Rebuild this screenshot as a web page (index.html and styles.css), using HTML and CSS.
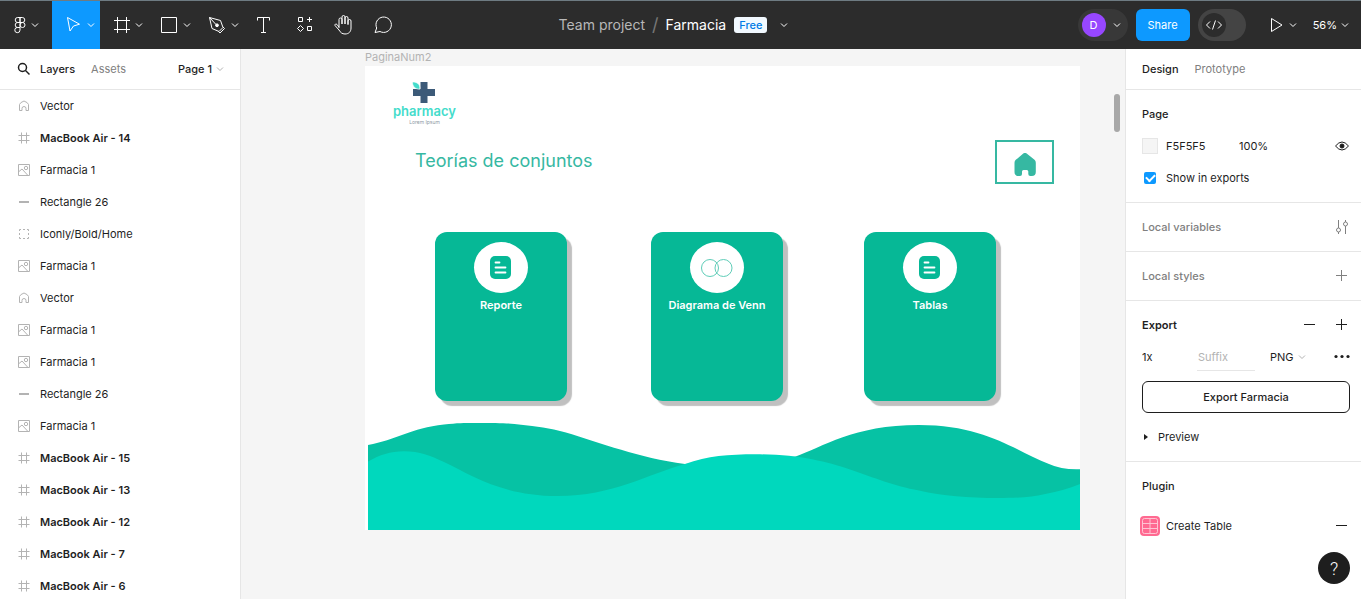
FILE: index.html
```html
<!DOCTYPE html>
<html lang="en">
<head>
<meta charset="utf-8">
<title>Farmacia</title>
<link rel="stylesheet" href="styles.css">
</head>
<body>
<svg class="sprite" aria-hidden="true">
  <symbol id="chev" viewBox="0 0 8 8"><path d="M1 2.5 4 5.5 7 2.5"/></symbol>
  <symbol id="vector" viewBox="0 0 16 16"><path d="M3.500 12.500V6.500Q4 4.500 8 3q4 1.500 4.500 3.500v6h-2.500v-2a2 2 0 0 0-4 0v2z"/></symbol>
  <symbol id="frame" viewBox="0 0 16 16"><path d="M5.500 2.500v11M10.500 2.500v11M2.500 5.500h11M2.500 10.500h11"/></symbol>
  <symbol id="image" viewBox="0 0 16 16"><path d="M2.500 2.500h11v11h-11zM3 9.500 6 7l6 6.500"/><circle cx="10" cy="6" r="1.700"/></symbol>
  <symbol id="line" viewBox="0 0 16 16"><path stroke-width="2" d="M3 8h10"/></symbol>
  <symbol id="group" viewBox="0 0 16 16"><path d="M3.500 5v-1.500H5M7 3.500h2M11 3.500h1.500V5M12.500 7v2M12.500 11v1.500H11M9 12.500H7M5 12.500H3.500V11M3.500 9V7"/></symbol>
  <symbol id="plus" viewBox="0 0 16 16"><path d="M7.500 2v11M2 7.500h11"/></symbol>
  <symbol id="minus" viewBox="0 0 16 16"><path d="M2 7.500h11"/></symbol>
  <symbol id="doc" viewBox="0 0 22 24"><rect width="21" height="23" rx="5" fill="#06b896"/><path d="M5.500 6.500H9.500M5.500 11.500h10M5.500 16.500h10" stroke="#fff" stroke-width="1.800" stroke-linecap="round"/></symbol>
</svg>
<header class="toolbar">
  <nav class="tools" aria-label="Tools">
    <button class="tool menu" aria-label="Main menu"><svg class="ico" viewBox="0 0 20 20"><path d="M10 2.500H7.700a2.500 2.500 0 0 0 0 5H10zM10 2.500h2.300a2.500 2.500 0 0 1 0 5H10zM10 7.500H7.700a2.500 2.500 0 0 0 0 5H10z"/><circle cx="12.500" cy="10" r="2.500"/><path d="M10 12.500H7.700a2.600 2.600 0 1 0 2.300 2.600z"/></svg><svg class="chev"><use href="#chev"/></svg></button>
    <button class="tool active" aria-label="Move"><svg class="ico" viewBox="0 0 20 20"><path d="m3.500 2.500 12 6.700-6 1.800-3.500 5z"/></svg><svg class="chev"><use href="#chev"/></svg></button>
    <button class="tool" aria-label="Frame"><svg class="ico" viewBox="0 0 20 20"><path d="M5.500 2v16M14.500 2v16M2 5.500h16M2 14.500h16"/></svg><svg class="chev"><use href="#chev"/></svg></button>
    <button class="tool" aria-label="Rectangle"><svg class="ico" viewBox="0 0 20 20"><path d="M1.500 2.500h15v15h-15z"/></svg><svg class="chev"><use href="#chev"/></svg></button>
    <button class="tool" aria-label="Pen"><svg class="ico" viewBox="0 0 20 20"><path d="m1.500 2.500 11 3 2.500 7-4 4-7-3zM1.500 2.500l6.500 7M15 12l1.500 1.500-4.500 4.500-1.500-1.500"/><circle cx="9" cy="10.300" r="1.400" fill="#fff"/></svg><svg class="chev"><use href="#chev"/></svg></button>
    <button class="tool single" aria-label="Text"><svg class="ico" viewBox="0 0 20 20"><path d="M3.500 5.500v-3h12v3M9.500 2.500v15M7 17.500h5"/></svg></button>
    <button class="tool single" aria-label="Resources"><svg class="ico" viewBox="0 0 20 20"><path d="M4.500 2.500h4v4h-4zM13.500 11.500h4v4h-4zM15.500 2v5M13 4.500h5M6.500 10.500l3 3-3 3-3-3z"/></svg></button>
    <button class="tool single" aria-label="Hand"><svg class="ico" viewBox="0 0 20 20"><path d="M5 13V4.500a1.500 1.500 0 0 1 3 0V9M8 9V2a1.500 1.500 0 0 1 3 0v7M11 9V3a1.500 1.500 0 0 1 3 0v7M14 9V6a1.500 1.500 0 0 1 3 0v7c0 3.500-2 6-6 6-3 0-4.500-1.500-6-4L1 10.500c-.5-1.300 1-2 2-1L5 12"/></svg></button>
    <button class="tool single" aria-label="Comment"><svg class="ico" viewBox="0 0 20 20"><path d="M1 17.500 2.700 13a7.700 7.700 0 1 1 3.300 3.500z"/></svg></button>
  </nav>
  <div class="title"><span class="team">Team project</span><span class="slash">/</span><span class="file">Farmacia</span><span class="free">Free</span><button class="drop" aria-label="File options"><svg class="chev"><use href="#chev"/></svg></button></div>
  <div class="actions">
    <button class="pill"><span class="avatar">D</span><svg class="chev"><use href="#chev"/></svg></button>
    <button class="share">Share</button>
    <button class="toggle" aria-label="Dev mode"><svg class="knob" viewBox="0 0 24 24"><path d="M8 8.500 4.500 12 8 15.500M16 8.500l3.500 3.500-3.500 3.500M13.500 7.500l-3 9"/></svg></button>
    <button class="play" aria-label="Present"><svg class="ico" viewBox="0 0 20 20"><path d="M5.500 3.500v13L16 10z"/></svg><svg class="chev"><use href="#chev"/></svg></button>
    <button class="percent">56%<svg class="chev"><use href="#chev"/></svg></button>
  </div>
</header>
<main class="work">
  <aside class="layers">
    <div class="tabs">
      <button class="search" aria-label="Search"><svg viewBox="0 0 16 16"><circle cx="6.500" cy="6.500" r="4"/><path d="m9.500 9.500 4 4"/></svg></button>
      <button class="tab on">Layers</button><button class="tab">Assets</button>
      <button class="pages">Page 1<svg class="chev"><use href="#chev"/></svg></button>
    </div>
    <ul class="list">
      <li><svg><use href="#vector"/></svg>Vector</li>
      <li class="top"><svg><use href="#frame"/></svg>MacBook Air - 14</li>
      <li><svg><use href="#image"/></svg>Farmacia 1</li>
      <li><svg><use href="#line"/></svg>Rectangle 26</li>
      <li><svg><use href="#group"/></svg>Iconly/Bold/Home</li>
      <li><svg><use href="#image"/></svg>Farmacia 1</li>
      <li><svg><use href="#vector"/></svg>Vector</li>
      <li><svg><use href="#image"/></svg>Farmacia 1</li>
      <li><svg><use href="#image"/></svg>Farmacia 1</li>
      <li><svg><use href="#line"/></svg>Rectangle 26</li>
      <li><svg><use href="#image"/></svg>Farmacia 1</li>
      <li class="top"><svg><use href="#frame"/></svg>MacBook Air - 15</li>
      <li class="top"><svg><use href="#frame"/></svg>MacBook Air - 13</li>
      <li class="top"><svg><use href="#frame"/></svg>MacBook Air - 12</li>
      <li class="top"><svg><use href="#frame"/></svg>MacBook Air - 7</li>
      <li class="top"><svg><use href="#frame"/></svg>MacBook Air - 6</li>
    </ul>
  </aside>
  <section class="canvas">
    <span class="frame-name">PaginaNum2</span>
    <div class="artboard">
      <div class="logo">
        <svg viewBox="0 0 24 22"><path fill="#3c5a78" d="M8.500 1h7v7H23v7h-7.500v7h-7v-7H1V8h7.500z"/><path fill="#44dccb" stroke="#fff" stroke-width=".6" d="M.5 1C5 1 8.500 3 7.700 8.300 3 8 .5 5.500.5 1z"/></svg>
        <span class="brand">pharmacy</span><span class="tagline">Lorem Ipsum</span>
      </div>
      <h1 class="heading">Teorías de conjuntos</h1>
      <button class="home" aria-label="Home"><svg viewBox="0 0 22 23"><path d="M9 .8a3 3 0 0 1 4 0l7.500 6q1.300 1.200 1.300 3V19a4 4 0 0 1-4 4h-1.500a2 2 0 0 1-2-2v-2.500a1.500 1.500 0 0 0-1.500-1.500H9.500A1.500 1.500 0 0 0 8 18.500V21a2 2 0 0 1-2 2H4.500a4 4 0 0 1-4-4V9.800q0-1.800 1.300-3z"/></svg></button>
      <article class="card report"><span class="disc"><svg class="doc"><use href="#doc"/></svg></span>Reporte</article>
      <article class="card venn"><span class="disc"><svg class="rings" viewBox="0 0 32 18"><circle cx="9" cy="9" r="8.500"/><circle cx="22.500" cy="9" r="8.500"/></svg></span>Diagrama de Venn</article>
      <article class="card tables"><span class="disc"><svg class="doc"><use href="#doc"/></svg></span>Tablas</article>
      <svg class="waves" viewBox="0 0 712 110" preserveAspectRatio="none"><path fill="#06c2a4" d="M0 25C28 20 43 8 76 4.500C90 3 95 3 108 3C130 3 140 3 153 4.700C168 6 182 8 197 12.300C234 23 270 38 317 44L427 36.700C455 27 485 5 551 5C620 5 650 33 681 44Q694 50 712 49.300V110H0Z"/><path fill="#00d8bd" d="M0 41.500C12 35 22 31.300 36 31.300C52 31.300 62 35.500 76 42C105 56 135 76 190 76C245 76 280 54 317 44C340 36 360 34.300 388 34.300C470 34.300 500 62 551 70.500C575 76 600 78 630 78C650 78 665 77 676 74.300Q698 70 712 64V110H0Z"/></svg>
    </div>
    <span class="thumb"></span>
  </section>
  <aside class="inspector">
    <div class="tabs"><button class="tab on">Design</button><button class="tab">Prototype</button></div>
    <section class="group">
      <h2 class="row">Page</h2>
      <div class="row"><span class="swatch"></span><input class="hex" aria-label="Page colour" value="F5F5F5"><input class="alpha" aria-label="Opacity" value="100%"><button class="act" aria-label="Visibility"><svg viewBox="0 0 16 16"><path d="M1.500 8q6.500-8 13 0-6.500 8-13 0z"/><circle cx="8" cy="8" r="2" fill="#1e1e1e"/></svg></button></div>
      <label class="row"><input class="check" type="checkbox" checked>Show in exports</label>
    </section>
    <section class="group muted"><h2 class="row">Local variables<button class="act" aria-label="Open variables"><svg viewBox="0 0 16 16"><path d="M4.500 1v8M4.500 13v2M11.500 1v2M11.500 7v8"/><circle cx="4.500" cy="11" r="2"/><circle cx="11.500" cy="5" r="2"/></svg></button></h2></section>
    <section class="group muted"><h2 class="row">Local styles<button class="act" aria-label="Add style"><svg><use href="#plus"/></svg></button></h2></section>
    <section class="group">
      <h2 class="row strong">Export<button class="act" aria-label="Remove export"><svg><use href="#minus"/></svg></button><button class="act next" aria-label="Add export"><svg><use href="#plus"/></svg></button></h2>
      <div class="row"><input class="scale" aria-label="Scale" value="1x"><input class="suffix" aria-label="Suffix" placeholder="Suffix"><select class="format" aria-label="Format"><option>PNG</option></select><svg class="chev pale"><use href="#chev"/></svg><button class="act" aria-label="More"><svg viewBox="0 0 16 16"><g fill="#1e1e1e" stroke="none"><circle cx="2" cy="7.500" r="1.600"/><circle cx="8" cy="7.500" r="1.600"/><circle cx="14" cy="7.500" r="1.600"/></g></svg></button></div>
      <button class="export">Export Farmacia</button>
      <button class="row preview"><svg viewBox="0 0 8 8"><path d="M2 1v6l4-3z"/></svg>Preview</button>
    </section>
    <section class="group last">
      <h2 class="row">Plugin</h2>
      <div class="row plugin"><svg class="table" viewBox="0 0 20 20"><rect width="20" height="20" rx="4" fill="#ff6a91" stroke="none"/><rect x="2.500" y="2.500" width="15" height="15" rx="2"/><path d="M2.500 7.500h15M2.500 12.500h15M10 2.500v15"/></svg>Create Table<button class="act" aria-label="Remove plugin"><svg><use href="#minus"/></svg></button></div>
    </section>
  </aside>
</main>
<button class="help" aria-label="Help">?</button>
</body>
</html>
```

FILE: styles.css
```css
* { box-sizing: border-box; }
body { margin: 0; height: 100vh; display: flex; flex-direction: column; overflow: hidden; font: 11px/16px Inter, "Liberation Sans", sans-serif; color: #1e1e1e; background: #fff; }
button, input, select { font: inherit; color: inherit; background: none; border: 0; padding: 0; margin: 0; }
input { min-width: 0; }
h1, h2 { margin: 0; font: inherit; }
svg { display: block; flex: none; fill: none; stroke: currentColor; }
.sprite { position: absolute; width: 0; height: 0; }
.chev { width: 8px; height: 8px; }

.toolbar { display: grid; grid-template-columns: 1fr auto 1fr; height: 49px; flex: none; border-top: 1px solid #6e7b82; background: #2c2c2c; color: #fff; }
.tools { display: flex; }
.tool { display: flex; align-items: center; width: 48px; padding-left: 12px; gap: 3px; }
.tool.menu { width: 52px; padding-left: 10px; gap: 1px; }
.tool.active { background: #0d99ff; }
.tool.single { width: 40px; padding-left: 10px; }
.ico { width: 20px; height: 20px; overflow: visible; }
.title { display: flex; align-items: center; padding-right: 14px; font-size: 14px; line-height: 24px; }
.team { color: #b8b8b8; }
.slash { color: #777; margin: 0 7px; font-size: 18px; }
.free { margin: 0 13px 0 8px; padding: 0 5px; border-radius: 3px; background: #f2f9ff; color: #007be5; font-size: 11px; font-weight: 500; line-height: 16px; }
.drop { display: flex; }
.actions { display: flex; align-items: center; justify-content: flex-end; padding-right: 12px; }
.pill { display: flex; align-items: center; gap: 7px; width: 50px; height: 32px; padding-left: 4px; border-radius: 16px; background: #383838; }
.avatar { width: 24px; border-radius: 50%; background: #9747ff; line-height: 24px; text-align: center; }
.share { height: 32px; margin: 0 8px; padding: 0 12px; border-radius: 6px; background: #0d99ff; }
.toggle { width: 48px; height: 32px; padding-left: 4px; border-radius: 16px; background: #444; }
.knob { width: 24px; height: 24px; border-radius: 50%; background: #2c2c2c; }
.play { display: flex; align-items: center; gap: 3px; margin: 0 16px 0 20px; }
.percent { display: flex; align-items: center; gap: 4px; }

.work { display: flex; flex: 1; min-height: 0; }
.layers { width: 241px; flex: none; border-right: 1px solid #e6e6e6; overflow: hidden; }
.tabs { display: flex; align-items: center; gap: 16px; height: 41px; padding: 0 16px; border-bottom: 1px solid #e6e6e6; }
.tab { color: #808080; }
.tab.on { color: #1e1e1e; font-weight: 500; }
.search { margin-right: -8px; }
.search svg { width: 16px; height: 16px; stroke-width: 1.5; }
.pages { display: flex; align-items: center; gap: 4px; margin-left: auto; font-weight: 500; }
.pages .chev, .pale { color: #b3b3b3; }
.list { list-style: none; margin: 0; padding: 0; }
.list li { display: flex; align-items: center; gap: 8px; height: 32px; padding-left: 16px; }
.list svg { width: 16px; height: 16px; color: #b3b3b3; }
.list .top { font-weight: 600; }

.canvas { position: relative; flex: 1; min-width: 0; overflow: hidden; background: #f5f5f5; }
.frame-name { position: absolute; left: 124px; top: 0; color: #b3b3b3; }
.artboard { position: absolute; left: 124px; top: 17px; width: 715px; height: 464px; background: #fff; }
.logo { position: absolute; left: 28px; top: 15px; display: flex; flex-direction: column; align-items: center; }
.logo svg { width: 24px; height: 22px; stroke: none; }
.brand { color: #44dccb; font: 600 13px/16px Inter, sans-serif; }
.tagline { color: #8e9aa5; font-size: 5px; line-height: 6px; }
.heading { position: absolute; left: 50px; top: 83px; color: #36b8a2; font-size: 18px; line-height: 24px; }
.home { position: absolute; left: 630px; top: 74px; display: flex; align-items: center; justify-content: center; width: 59px; height: 44px; padding-top: 5px; border: 2px solid #36b8a2; color: #36b8a2; }
.home svg { width: 22px; height: 23px; fill: currentColor; stroke: none; }
.card { position: absolute; top: 166px; display: flex; flex-direction: column; align-items: center; gap: 4px; width: 132px; height: 169px; padding-top: 10px; border-radius: 12px; background: #06b896; box-shadow: 5px 5px 1px #c0c0c0; color: #fff; font-weight: 600; }
.report { left: 70px; }
.venn { left: 286px; }
.tables { left: 499px; }
.disc { display: flex; align-items: center; justify-content: center; width: 54px; height: 51px; border-radius: 50%; background: #fff; color: #5fcdb8; }
.doc { width: 22px; height: 24px; stroke: none; }
.rings { width: 32px; height: 18px; }
.waves { position: absolute; left: 3px; bottom: 0; width: 712px; height: 110px; stroke: none; }
.thumb { position: absolute; right: 5px; top: 45px; width: 6px; height: 38px; border-radius: 3px; background: #a8a8a8; }

.inspector { width: 236px; flex: none; border-left: 1px solid #e6e6e6; }
.group { padding: 8px 11px 8px 16px; border-bottom: 1px solid #e6e6e6; }
.group.last { border: 0; }
.row { display: flex; align-items: center; height: 32px; }
h2.row { font-weight: 500; }
h2.strong { font-weight: 600; }
.muted { color: #808080; }
.act { margin-left: auto; }
.act.next { margin-left: 16px; }
.act svg { width: 16px; height: 16px; }
.swatch { width: 16px; height: 16px; margin-right: 8px; border: 1px solid #e6e6e6; background: #f5f5f5; }
.hex { width: 73px; }
.alpha { width: 48px; }
.check { appearance: none; display: grid; place-items: center; width: 12px; height: 12px; margin: 0 10px 0 2px; border-radius: 2px; background: #0d99ff; }
.check:checked::before { content: ""; width: 7px; height: 4px; margin-bottom: 2px; border: solid #fff; border-width: 0 0 2px 2px; rotate: -45deg; }
.scale { width: 55px; }
.suffix { width: 58px; height: 28px; margin-right: 15px; border-bottom: 1px solid #e6e6e6; padding-left: 1px; }
.suffix::placeholder { color: #b3b3b3; }
.format { appearance: none; width: 28px; }
.export { display: block; width: 100%; height: 32px; margin: 8px 0; border: 1px solid #1e1e1e; border-radius: 6px; font-weight: 500; }
.preview { gap: 8px; }
.preview svg { width: 8px; height: 8px; fill: currentColor; stroke: none; }
.plugin { height: 40px; margin: 4px 0 0 -2px; }
.table { width: 20px; height: 20px; margin-right: 6px; color: #ffc4d3; }
.help { position: absolute; right: 11px; bottom: 15px; width: 32px; height: 32px; border-radius: 50%; background: #1e1e1e; color: #fff; font: 18px Roboto, sans-serif; font-weight: 300; }
```
